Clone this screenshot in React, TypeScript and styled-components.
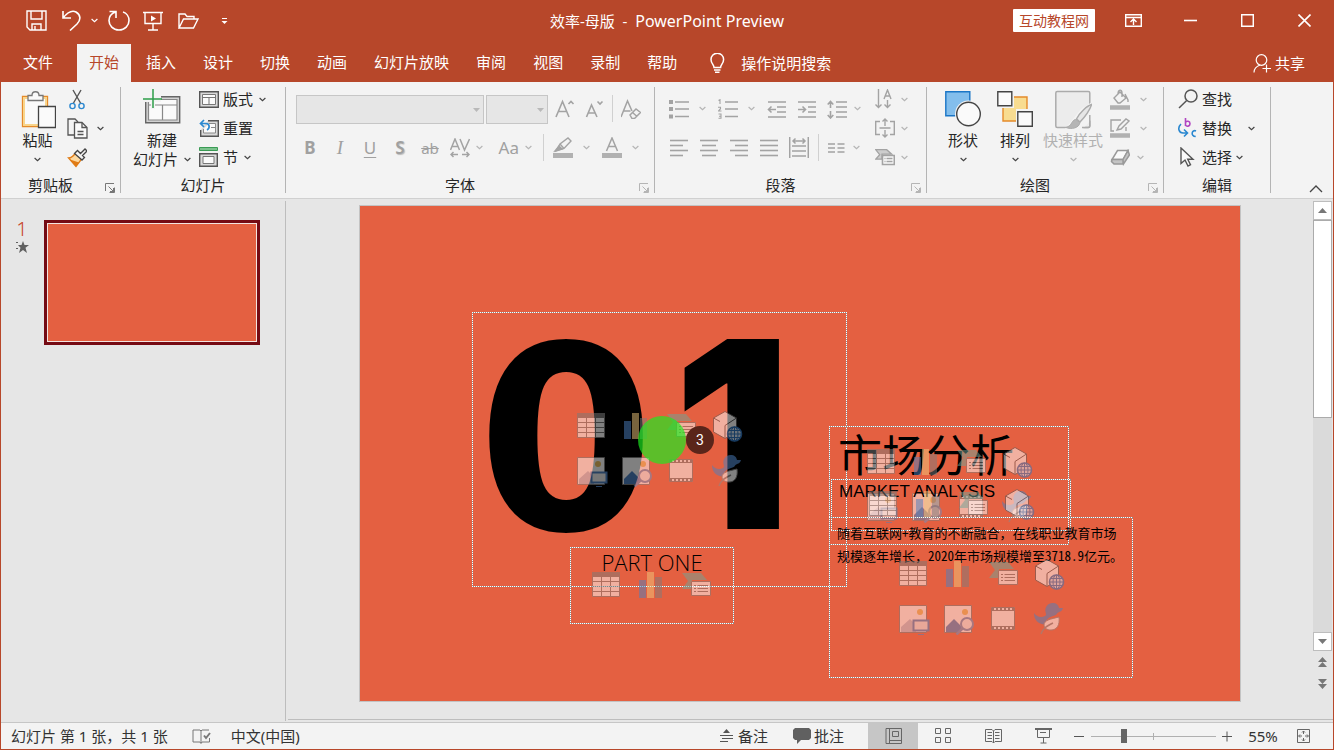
import React from "react";
import styled, { createGlobalStyle, css } from "styled-components";

const brand = "#b7472a";
const coral = "#e46041";
const uiFont = `"Noto Sans", "Noto Sans CJK SC", sans-serif`;

const GlobalStyle = createGlobalStyle`
  * { box-sizing: border-box; }
  body { margin: 0; font: 15px/19px ${uiFont}; color: #262626; }
  button, select, input { font: inherit; color: inherit; margin: 0; padding: 0; border: 0; background: none; }
  button { white-space: nowrap; }
  svg { display: block; flex: none; }
  h1, p, ol { margin: 0; padding: 0; font-weight: 400; list-style: none; }
`;

/* ---------- shell ---------- */

const Window = styled.div`
  display: flex;
  flex-direction: column;
  height: 100vh;
  min-height: 600px;
  border: 1px solid ${brand};
  background: #e6e6e6;
  overflow: hidden;
`;

const TitleBar = styled.header`
  display: grid;
  grid-template-columns: 1fr auto 1fr;
  height: 43px;
  background: ${brand};
  color: #fff;
`;

const QuickAccess = styled.div`
  display: flex;
  align-items: center;
  padding: 0 0 4px 20px;
`;

const QuickButton = styled.button<{ $w: number }>`
  width: ${(p) => p.$w}px;
  height: 30px;
  display: flex;
  align-items: center;
  justify-content: center;
`;

const DocTitle = styled.h1`
  font-size: 15px;
  line-height: 40px;
  white-space: pre;
`;

const AppName = styled.span`
  font-size: 16px;
`;

const WindowControls = styled.div`
  display: flex;
  justify-content: flex-end;
  align-items: flex-start;
`;

const AccountBadge = styled.button`
  height: 23px;
  margin: 8px 10px 0 0;
  padding: 0 6px;
  border-radius: 1px;
  background: #fff;
  color: ${brand};
  font-size: 14px;
  line-height: 23px;
`;

const ControlButton = styled.button`
  width: 57px;
  height: 38px;
  display: flex;
  align-items: center;
  justify-content: center;
`;

const TabBar = styled.nav`
  display: flex;
  gap: 3px;
  height: 38px;
  padding: 0 16px 0 10px;
  background: ${brand};
  color: #fff;
`;

const Tab = styled.button<{ $active?: boolean; $file?: boolean }>`
  padding: 0 12px 2px;
  line-height: 34px;
  ${(p) => p.$file && css`margin-right: 9px;`}
  ${(p) => p.$active && css`background: #f3f3f3; color: ${brand};`}
`;

const TabAction = styled.button<{ $gap: number }>`
  display: flex;
  align-items: center;
  gap: ${(p) => p.$gap}px;
  padding: 0 12px;
  line-height: 36px;
`;

const Spacer = styled.div`
  flex: 1;
`;

/* ---------- ribbon ---------- */

const RibbonBar = styled.section`
  display: flex;
  height: 117px;
  padding: 5px 0;
  background: #f3f3f3;
  border-bottom: 1px solid #d0d0d0;
`;

const Group = styled.div<{ $w: number }>`
  display: flex;
  flex-direction: column;
  justify-content: space-between;
  width: ${(p) => p.$w}px;
  flex: none;
  border-right: 1px solid #b4b4b4;
`;

const GroupBody = styled.div<{ $left: number; $gap?: number }>`
  display: flex;
  align-items: flex-start;
  gap: ${(p) => p.$gap ?? 0}px;
  padding-left: ${(p) => p.$left}px;
`;

const GroupFooter = styled.div`
  display: flex;
  align-items: flex-end;
  height: 16px;
  line-height: 16px;
  text-align: center;
`;

const GroupName = styled.span`
  flex: 1;
`;

const Launcher = styled.button`
  width: 20px;
  padding-left: 5px;
`;

const LargeButton = styled.button<{ $w: number; $disabled?: boolean }>`
  display: flex;
  flex-direction: column;
  align-items: center;
  width: ${(p) => p.$w}px;
  padding-top: 2px;
  color: ${(p) => (p.$disabled ? "#b1b1b1" : "#262626")};
  > svg { margin-bottom: 2px; }
`;

const LargeLine = styled.span`
  display: flex;
  align-items: center;
  gap: 6px;
  height: 19px;
`;

const Stack = styled.div<{ $left?: number }>`
  display: flex;
  flex-direction: column;
  gap: 5px;
  padding-left: ${(p) => p.$left ?? 0}px;
`;

const SmallButton = styled.button<{ $gap?: number }>`
  display: flex;
  align-items: center;
  gap: ${(p) => p.$gap ?? 6}px;
  height: 24px;
  color: #262626;
`;

const SmallLabel = styled.span`
  padding-right: 2px;
`;

const WideLabel = styled.span`
  padding-right: 12px;
`;

const RowStack = styled.div`
  display: flex;
  flex-direction: column;
  gap: 10px;
  padding-top: 8px;
`;

const ToolRow = styled.div<{ $left?: number; $gap?: number; $flush?: boolean }>`
  display: flex;
  align-items: center;
  gap: ${(p) => p.$gap ?? 10}px;
  height: 29px;
  padding-left: ${(p) => p.$left ?? 0}px;
  padding-bottom: ${(p) => (p.$flush ? 0 : 2)}px;
`;

const ToolButton = styled.button`
  width: 20px;
  height: 24px;
  display: flex;
  align-items: center;
  justify-content: center;
  color: #a0a0a0;
`;

const SplitButton = styled.button<{ $gap?: number }>`
  display: flex;
  align-items: center;
  gap: ${(p) => p.$gap ?? 10}px;
  height: 24px;
  margin-right: 2px;
  color: #a0a0a0;
`;

const Letter = styled.span<{ $look?: "bold" | "italic" | "under" | "shadow" | "strike" | "case" }>`
  font-size: 17px;
  line-height: 22px;
  ${(p) => p.$look === "bold" && css`font-weight: 700;`}
  ${(p) => p.$look === "italic" && css`font-family: "Liberation Serif", serif; font-style: italic; font-size: 19px;`}
  ${(p) => p.$look === "under" && css`text-decoration: underline; text-underline-offset: 3px;`}
  ${(p) => p.$look === "shadow" && css`font-weight: 600; text-shadow: 1px 1px 1px #bbb;`}
  ${(p) => p.$look === "strike" && css`font-size: 15px; text-decoration: line-through;`}
  ${(p) => p.$look === "case" && css`width: 24px; text-align: right;`}
`;

const Divider = styled.i`
  width: 1px;
  height: 27px;
  margin: 0 -1px;
  background: #d0d0d0;
`;

const Combo = styled.label<{ $w: number }>`
  position: relative;
  width: ${(p) => p.$w}px;
  height: 29px;
  svg { position: absolute; right: 4px; top: 13px; }
`;

const ComboSelect = styled.select`
  appearance: none;
  width: 100%;
  height: 100%;
  border: 1px solid #c6c6c6;
  background: #e6e6e6;
  opacity: 1;
`;

const CollapseButton = styled.button`
  align-self: flex-end;
  margin: 0 10px 0 0;
`;

/* ---------- work area ---------- */

const WorkArea = styled.div`
  display: flex;
  flex: 1;
  min-height: 0;
`;

const ThumbPane = styled.aside`
  width: 285px;
  flex: none;
  margin: 2px 0 1px;
  padding: 19px 0 0 11px;
  border-right: 1px solid #bdbdbd;
`;

const ThumbItem = styled.li`
  display: flex;
  gap: 12px;
`;

const ThumbIndex = styled.div`
  display: flex;
  flex-direction: column;
  align-items: center;
  gap: 4px;
  width: 20px;
  color: #c8472b;
  font-size: 20px;
  font-weight: 300;
  line-height: 17px;
`;

const Thumb = styled.button`
  width: 216px;
  height: 125px;
  border: 3px solid #750b14;
  box-shadow: inset 0 0 0 1px #f3e4e0;
  background: ${coral};
`;

const Editor = styled.main`
  flex: 1;
  display: flex;
  min-width: 0;
  margin: 0 0 2px 2px;
  border-bottom: 1px solid #bdbdbd;
`;

const Stage = styled.div`
  flex: 1;
  display: flex;
  justify-content: center;
  align-items: flex-start;
  padding: 6px 0 0;
  min-width: 0;
`;

const SlideCanvas = styled.div`
  position: relative;
  flex: none;
  width: 882px;
  height: 497px;
  border: 1px solid #c3c3c3;
  background: ${coral};
  color: #000;
`;

const dots = (dir: string) =>
  `repeating-linear-gradient(${dir}, #fff 0 1px, #8c8f90 1px 2px)`;

const Placeholder = styled.div<{ $x: number; $y: number; $w: number; $h: number }>`
  position: absolute;
  left: ${(p) => p.$x}px;
  top: ${(p) => p.$y}px;
  width: ${(p) => p.$w}px;
  height: ${(p) => p.$h}px;
  background:
    ${dots("90deg")} top / 100% 1px no-repeat,
    ${dots("90deg")} bottom / 100% 1px no-repeat,
    ${dots("180deg")} left / 1px 100% no-repeat,
    ${dots("180deg")} right / 1px 100% no-repeat;
`;

const IconGrid = styled.div<{ $cols: number }>`
  position: absolute;
  inset: 0 0 2px;
  display: grid;
  grid-template-columns: repeat(${(p) => p.$cols}, 32px);
  gap: 13px;
  place-content: center;
  opacity: 0.5;
`;

const BigNumber = styled.p`
  display: flex;
  align-items: baseline;
  gap: 18px;
  padding-left: 5px;
  font: 900 261px/245px Inter, sans-serif;
`;

const RoundDigit = styled.span`
  font-family: "DejaVu Sans", sans-serif;
  font-size: 256px;
  font-weight: 700;
`;

const PartLabel = styled.p`
  padding-top: 3px;
  text-align: center;
  font: 300 22px/24px "Open Sans", sans-serif;
`;

const Headline = styled.p`
  padding: 4px 0 0 9px;
  font: 400 44px/46px "Noto Sans CJK SC", sans-serif;
  white-space: nowrap;
`;

const Subhead = styled.p`
  padding: 3px 0 0 8px;
  font: 17px/20px "Liberation Sans", sans-serif;
`;

const BodyCopy = styled.p`
  padding: 4px 0 0 8px;
  font: 13px/23px "Noto Sans CJK SC", sans-serif;
  white-space: nowrap;
`;

const HalfWidth = styled.span`
  font-feature-settings: "hwid" 1;
`;

const ClickDot = styled.i`
  position: absolute;
  left: 278px;
  top: 210px;
  width: 48px;
  height: 48px;
  border-radius: 50%;
  background: rgba(28, 234, 31, 0.68);
`;

const ClickCount = styled.b`
  position: absolute;
  left: 326px;
  top: 220px;
  width: 28px;
  height: 28px;
  border-radius: 50%;
  background: #5a251a;
  color: #fff;
  font: 14px/28px Roboto, sans-serif;
  text-align: center;
`;

/* ---------- scroll bar ---------- */

const ScrollColumn = styled.div`
  width: 21px;
  flex: none;
  display: flex;
  flex-direction: column;
  align-items: center;
  padding: 2px 0 24px;
`;

const ScrollButton = styled.button`
  width: 19px;
  height: 19px;
  display: grid;
  place-items: center;
  border: 1px solid #bdbdbd;
  background: #fff;
`;

const ScrollTrack = styled.div`
  flex: 1;
  width: 19px;
  background: #dadada;
`;

const ScrollThumb = styled.div`
  height: 48%;
  border: 1px solid #ababab;
  background: #fff;
`;

const PageButton = styled.button`
  width: 19px;
  height: 22px;
  display: grid;
  place-items: center;
`;

/* ---------- status bar ---------- */

const StatusBar = styled.footer`
  display: flex;
  align-items: center;
  height: 27px;
  flex: none;
  padding: 0 15px 0 10px;
  background: #f3f3f3;
  border-top: 1px solid #c6c6c6;
`;

const StatusItem = styled.button<{ $gap?: number; $right?: number }>`
  display: flex;
  align-items: center;
  gap: ${(p) => p.$gap ?? 0}px;
  margin-right: ${(p) => p.$right ?? 0}px;
  color: #333;
`;

const ViewButton = styled.button<{ $active?: boolean }>`
  width: 50px;
  height: 26px;
  display: grid;
  place-items: center;
  background: ${(p) => (p.$active ? "#c6c6c6" : "transparent")};
`;

const ZoomButton = styled.button`
  width: 23px;
  height: 26px;
  display: grid;
  place-items: center;
`;

const ZoomRange = styled.input`
  appearance: none;
  width: 125px;
  height: 14px;
  background:
    linear-gradient(#b0b0b0, #b0b0b0) center / 1px 7px no-repeat,
    linear-gradient(#b0b0b0, #b0b0b0) center / 100% 1px no-repeat;
  &::-webkit-slider-thumb {
    appearance: none;
    width: 6px;
    height: 14px;
    background: #666;
  }
`;

const ZoomValue = styled.button`
  width: 48px;
  margin-right: 10px;
  color: #333;
`;

/* ---------- icons ---------- */

type IconProps = {
  w?: number;
  h?: number;
  vb?: string;
  stroke?: string;
  fill?: string;
  sw?: number;
  children: React.ReactNode;
};

const Icon = ({ w = 20, h = 20, vb, stroke = "#555", fill = "none", sw = 1, children }: IconProps) => (
  <svg width={w} height={h} viewBox={vb ?? `0 0 ${w} ${h}`} fill={fill} stroke={stroke} strokeWidth={sw} aria-hidden="true">
    {children}
  </svg>
);

const Chevron = ({ c = "#444" }: { c?: string }) => (
  <Icon w={7} h={5} stroke={c} sw={1.2}><path d="M.6 1l2.9 2.6L6.4 1" /></Icon>
);

const Caret = () => (
  <Icon w={8} h={4} fill="#b9b9b9" stroke="none"><path d="M1 0h7L4.500 4z" /></Icon>
);

const LauncherIcon = ({ c = "#777" }: { c?: string }) => (
  <Icon w={10} h={10} stroke={c}><path d="M.5 8V.5H9M3.500 3.500l5 5M9.500 4.500v5h-5M8.500 5v4.500M5 8.500h4" /></Icon>
);

const gray = "#a3a3a3";

const Lines = ({ rows }: { rows: [number, number][] }) => (
  <Icon h={18} stroke={gray} sw={1.6}>
    {rows.map(([a, b], i) => <path key={i} d={`M${a} ${1.5 + i * 5}H${b}`} />)}
  </Icon>
);

const TableGlyph = () => (
  <Icon w={32} h={32} stroke="#7a7a7a">
    <path d="M1.500 7.500h27v20h-27z" fill="#fff" />
    <path d="M1 3h28v5H1z" fill="#7a7a7a" stroke="none" />
    <path d="M10.500 8v19M19.500 8v19M2 12.500h26M2 17.500h26M2 22.500h26" />
  </Icon>
);
const ChartGlyph = () => (
  <Icon w={32} h={32} stroke="none">
    <path d="M3 11h7v18H3z" fill="#4c80bf" />
    <path d="M11 3h7v26h-7z" fill="#f0c87c" />
    <path d="M19 8h7v21h-7z" fill="#7d7d7d" />
  </Icon>
);
const SmartArtGlyph = () => (
  <Icon w={32} h={32} stroke="#7a7a7a">
    <path d="M1 4h19l6 7H11v9H1l6-8z" fill="#70a497" stroke="none" />
    <path d="M10.500 12.500h19v14h-19z" fill="#fff" />
    <path d="M13 16.500h2M16.500 16.500H27M13 19.500h2M16.500 19.500H27M13 22.500h2M16.500 22.500H27" />
  </Icon>
);
const CubeGlyph = () => (
  <Icon w={32} h={32} stroke="#555">
    <path d="M14 1.500L25.500 8v14L14 28.500 2.500 22V8z" fill="#fff" />
    <path d="M2.500 8L9 11.500M14 28V15.500L25.500 8" />
    <circle cx="23.500" cy="24" r="7" fill="#d6e3f2" stroke="#2f74bd" strokeWidth="1.600" />
    <path d="M16.500 24h14M18 20.500h11M18 27.500h11M23.500 17v14" stroke="#2f74bd" />
    <ellipse cx="23.500" cy="24" rx="3.500" ry="7" stroke="#2f74bd" />
  </Icon>
);
const PictureGlyph = () => (
  <Icon w={32} h={32} stroke="#7a7a7a">
    <path d="M1.500 2.500h27v27h-27z" fill="#fff" />
    <circle cx="22" cy="9" r="3" fill="#f0c060" stroke="none" />
    <path d="M3 29v-5l9-8 6 6v7z" fill="#c0c8d8" stroke="none" />
    <path d="M15.500 17.500h15v10h-15z" fill="#eee" stroke="#4c80bf" strokeWidth="2" />
    <path d="M20 31.500h6" stroke="#4c80bf" />
  </Icon>
);
const OnlinePictureGlyph = () => (
  <Icon w={32} h={32} stroke="#7a7a7a">
    <path d="M1.500 2.500h27v27h-27z" fill="#fff" />
    <circle cx="22" cy="9" r="3" fill="#f0c060" stroke="none" />
    <path d="M3 29v-5l8-8 7 7v6z" fill="#4c80bf" stroke="none" />
    <circle cx="24" cy="21" r="6" fill="#f6f6f6" stroke="#6d8fc0" strokeWidth="2" />
    <path d="M19.500 25.500l-6 6" stroke="#6d8fc0" strokeWidth="2.500" />
  </Icon>
);
const FilmGlyph = () => (
  <Icon w={32} h={32} stroke="#7a7a7a">
    <path d="M3.500 4.500h23v22h-23z" fill="#fff" />
    <path d="M4 6h22M4 25h22" strokeWidth="3" strokeDasharray="2 2" />
    <path d="M4 7.500h22M4 23.500h22" />
  </Icon>
);
const DuckGlyph = () => (
  <Icon w={32} h={32} stroke="none">
    <path d="M1 10c3 4 7 5 11 3 1.500-1 1-2 .5-4C11.500 4 15 0 19.500 0c4 0 6 2 6.500 5h4c-1 4-4 3.500-5.500 5-1 1-1 2-3 2.500-6 1.500-9 4.500-9.500 9C5 21 1 17 1 10z" fill="#4c80bf" />
    <path d="M26 14c1 8-2 13-8 13-4 0-7-2-7-5 0-5 7-6 15-8z" fill="#fff" stroke="#8a8a8a" />
    <path d="M8 31c2-6 6-8 12-11" fill="none" stroke="#8a8a8a" strokeWidth="1.500" />
  </Icon>
);

const allGlyphs = [TableGlyph, ChartGlyph, SmartArtGlyph, CubeGlyph, PictureGlyph, OnlinePictureGlyph, FilmGlyph, DuckGlyph];

const ContentIcons = ({ count }: { count: number }) => (
  <IconGrid $cols={Math.min(count, 4)}>
    {allGlyphs.slice(0, count).map((G, i) => <G key={i} />)}
  </IconGrid>
);

/* ---------- sections ---------- */

const tabs = ["插入", "设计", "切换", "动画", "幻灯片放映", "审阅", "视图", "录制", "帮助"];

const Header = () => (
  <>
    <TitleBar>
      <QuickAccess>
        <QuickButton $w={30} aria-label="保存">
          <Icon w={21} h={21} stroke="#fff" sw={1.4}><path d="M1 1h19v19H4l-3-3zM5 1v8h11V1M6 20v-6h9v6M9 16v4" /></Icon>
        </QuickButton>
        <QuickButton $w={40} aria-label="撤消">
          <Icon w={19} h={21} stroke="#fff" sw={1.6}><path d="M1 1v7h8M1 8c4-5 9-8 13-6 5 3 5 8 1 12l-7 6.500" /></Icon>
        </QuickButton>
        <QuickButton $w={6} aria-label="撤消选项"><Chevron c="#fff" /></QuickButton>
        <QuickButton $w={43} aria-label="重复">
          <Icon w={22} h={21} stroke="#fff" sw={1.6}><path d="M1.500 1.500H8V8M7.500 2C3.500 3.500 1 7 1 10.500 1 15.500 5 20 11 20s10-4.500 10-9.500c0-4-2.500-7.500-6-8.500" /></Icon>
        </QuickButton>
        <QuickButton $w={26} aria-label="从头开始">
          <Icon w={20} h={20} stroke="#fff" sw={1.4}><path d="M0 1.500h20M2 2v10.500h16V2M10 12.500V19M5 19h10" /><path d="M8 4.500l5 3-5 3z" fill="#fff" stroke="none" /></Icon>
        </QuickButton>
        <QuickButton $w={45} aria-label="打开">
          <Icon w={21} h={16} stroke="#fff" sw={1.4}><path d="M1 15V1h6l2 2.500h7V6M1 15L5.500 6H20l-4.500 9z" /></Icon>
        </QuickButton>
        <QuickButton $w={26} aria-label="自定义快速访问工具栏">
          <Icon w={7} h={8} stroke="#fff"><path d="M1 1.500h5" /><path d="M.5 4h6l-3 3z" fill="#fff" stroke="none" /></Icon>
        </QuickButton>
      </QuickAccess>
      <DocTitle>{"效率-母版  -  "}<AppName>PowerPoint Preview</AppName></DocTitle>
      <WindowControls>
        <AccountBadge>互动教程网</AccountBadge>
        <ControlButton aria-label="功能区显示选项">
          <Icon w={17} h={13} stroke="#fff" sw={1.4}><path d="M.7.700h15.600v11.600H.7zM1 3.500h15M8.500 11V5.500M5.500 8l3-3 3 3" /></Icon>
        </ControlButton>
        <ControlButton aria-label="最小化"><Icon w={13} h={13} stroke="#fff" sw={1.6}><path d="M0 6.500h13" /></Icon></ControlButton>
        <ControlButton aria-label="最大化"><Icon w={13} h={13} stroke="#fff" sw={1.5}><path d="M.7.700h11.600v11.600H.7z" /></Icon></ControlButton>
        <ControlButton aria-label="关闭"><Icon w={13} h={13} stroke="#fff" sw={1.6}><path d="M.5.500l12 12M12.500.500l-12 12" /></Icon></ControlButton>
      </WindowControls>
    </TitleBar>
    <TabBar>
      <Tab $file>文件</Tab>
      <Tab $active>开始</Tab>
      {tabs.map((t) => <Tab key={t}>{t}</Tab>)}
      <TabAction $gap={13}>
        <Icon w={24} h={20} vb="-6 0 24 20" stroke="#fff" sw={1.500}>
          <path d="M4 14.500c0-3-3-4-3-8a6.300 6.300 0 0 1 12.600 0c0 4-3 5-3 8zM4 17h6.500M5 19.300h4.500" />
        </Icon>
        操作说明搜索
      </TabAction>
      <Spacer />
      <TabAction $gap={3}>
        <Icon w={19} h={19} stroke="#fff" sw={1.2}><path d="M1 18.500c0-4 2-6 6-7.500M13.500 10.500v8M9.500 14.500h8.500" /><circle cx="8.500" cy="6" r="5.300" /></Icon>
        共享
      </TabAction>
    </TabBar>
  </>
);

const Footer = ({ name, launcher }: { name: string; launcher?: string }) => (
  <GroupFooter>
    <GroupName>{name}</GroupName>
    {launcher && <Launcher aria-label={`${name}设置`}><LauncherIcon c={launcher} /></Launcher>}
  </GroupFooter>
);

const off = "#b5b5b5";

const Ribbon = () => (
  <RibbonBar>
    <Group $w={120}>
      <GroupBody $left={17} $gap={5}>
        <LargeButton $w={39}>
          <Icon w={36} h={40}>
            <path d="M2.500 7.500h25v30h-25z" fill="#fafafa" stroke="#e58a2a" strokeWidth="1.300" />
            <path d="M4 9h22v27H4z" stroke="#f8d58c" strokeWidth="2" />
            <path d="M8 11.500v-5h4c0-5 7-5 7 0h4v5z" fill="#fafafa" stroke="#777" strokeWidth="1.300" />
            <path d="M18.500 17.500h17v21h-17z" fill="#fafafa" stroke="#444" strokeWidth="1.300" />
          </Icon>
          <LargeLine>粘贴</LargeLine>
          <LargeLine><Chevron /></LargeLine>
        </LargeButton>
        <Stack $left={5}>
          <SmallButton aria-label="剪切">
            <Icon h={21} sw={1.400}><path d="M6 1l7.500 13M14 1L6.500 14" /><circle cx="5.500" cy="17" r="2.600" stroke="#2b88d0" /><circle cx="14.500" cy="17" r="2.600" stroke="#2b88d0" /></Icon>
          </SmallButton>
          <SmallButton $gap={9} aria-label="复制">
            <Icon w={21} h={21} sw={1.300}><path d="M7 17H1V1h7l3 3" /><path d="M7.500 4.500h7.500l5 5V20H7.500z" fill="#fafafa" /><path d="M15 5v4.500h5M10.500 13.500h6M10.500 16.500h6" /></Icon>
            <Chevron />
          </SmallButton>
          <SmallButton aria-label="格式刷">
            <Icon h={21} sw={1.300}><path d="M9 5.500l6 6-6 8L1.500 11c3 0 5-2 7.500-5.500z" fill="#fdd9a0" stroke="#e07b15" /><path d="M3 12.500l6 7 3-4z" fill="#e07b15" stroke="none" /><path d="M7.500 6.500l3-3 3 3L18 2l2 2-4.500 4.500 2 2-2.500 2.500z" fill="#f3f3f3" stroke="#444" /></Icon>
          </SmallButton>
        </Stack>
      </GroupBody>
      <Footer name="剪贴板" launcher="#777" />
    </Group>

    <Group $w={165}>
      <GroupBody $left={10} $gap={5}>
        <LargeButton $w={62}>
          <Icon w={38} h={40}>
            <path d="M2.700 7.700h34v26h-34z" fill="#d2d2d2" stroke="#666" strokeWidth="1.400" />
            <path d="M5.500 10.500h28.500v20.500H5.500zM5.500 16h28.500M19.500 16v15" fill="#fafafa" stroke="#888" strokeWidth="1.200" />
            <path d="M0 6h18v7H12v7H8V13H0z" fill="#f3f3f3" stroke="none" />
            <path d="M0 10h19M10 0v19" stroke="#2e9e4a" strokeWidth="1.500" />
          </Icon>
          <LargeLine>新建</LargeLine>
          <LargeLine>幻灯片 <Chevron /></LargeLine>
        </LargeButton>
        <Stack $left={1}>
          <SmallButton $gap={4}>
            <Icon h={17}><path d="M.7.700h18.600v15.600H.7z" fill="#d9d9d9" strokeWidth="1.400" /><path d="M3.500 3.500h13v10h-13zM3.500 6.500h13M10 6.500v7" fill="#fafafa" stroke="#777" /></Icon>
            <SmallLabel>版式</SmallLabel><Chevron />
          </SmallButton>
          <SmallButton $gap={4}>
            <Icon h={18}><path d="M9 1.700h10.300v15.600H1.700V11" fill="#d9d9d9" strokeWidth="1.400" /><path d="M10 4.500h6.500v9.500H4.500v-4M12 8.500h4" fill="#fafafa" stroke="#888" /><path d="M1 4.500h6c4 0 4 5 1 6.500M5 1L1.500 4.500 5 8" stroke="#2b88d0" strokeWidth="1.700" /></Icon>
            重置
          </SmallButton>
          <SmallButton $gap={4}>
            <Icon h={20}><path d="M.5.500h18v3H.5z" fill="#7cc28d" stroke="#3a9b54" /><path d="M.7 6.700h17.600v12.600H.7z" strokeWidth="1.400" fill="#d9d9d9" /><path d="M4 9.500h11v7H4z" fill="#fafafa" stroke="#777" /></Icon>
            <SmallLabel>节</SmallLabel><Chevron />
          </SmallButton>
        </Stack>
      </GroupBody>
      <Footer name="幻灯片" />
    </Group>

    <Group $w={369}>
      <GroupBody $left={10}>
        <RowStack>
          <ToolRow $gap={2} $flush>
            <Combo $w={188}><ComboSelect disabled aria-label="字体" /><Caret /></Combo>
            <Combo $w={62}><ComboSelect disabled aria-label="字号" /><Caret /></Combo>
            <ToolRow $left={5} $gap={9}>
              <ToolButton aria-label="增大字号"><Icon stroke={gray} sw={1.600}><path d="M1 18L7.500 2.500 14 18M3.500 12.500h8" /><path d="M13.500 5l2.500-2.500L18.500 5" /></Icon></ToolButton>
              <ToolButton aria-label="减小字号"><Icon stroke={gray} sw={1.600}><path d="M2.500 18L7.500 6 13 18M4.500 14h7" /><path d="M13.500 2.500L16 5l2.500-2.500" /></Icon></ToolButton>
              <Divider />
              <ToolButton aria-label="清除格式"><Icon stroke={gray} sw={1.500}><path d="M0 18L6.500 2 11 12M2.500 12h7" /><path d="M9 16l6-6 4.500 3.500-6 6H11zM11.500 13.500l4 3.500" /></Icon></ToolButton>
            </ToolRow>
          </ToolRow>
          <ToolRow $left={4}>
            <ToolButton aria-label="加粗"><Letter $look="bold">B</Letter></ToolButton>
            <ToolButton aria-label="倾斜"><Letter $look="italic">I</Letter></ToolButton>
            <ToolButton aria-label="下划线"><Letter $look="under">U</Letter></ToolButton>
            <ToolButton aria-label="文字阴影"><Letter $look="shadow">S</Letter></ToolButton>
            <ToolButton aria-label="删除线"><Letter $look="strike">ab</Letter></ToolButton>
            <SplitButton $gap={6} aria-label="字符间距">
              <Icon h={20} stroke={gray} sw={1.500}><path d="M.5 12L5 1l4.500 11M2 8.500h6M10 1l4.500 11L19.500 1M1 16.500h7M12 16.500h7M3.500 14L1 16.500 3.500 19M16.500 14l2.500 2.500-2.500 2.500" /></Icon>
              <Chevron c={off} />
            </SplitButton>
            <SplitButton $gap={6} aria-label="更改大小写"><Letter $look="case">Aa</Letter><Chevron c={off} /></SplitButton>
            <Divider />
            <SplitButton aria-label="突出显示颜色">
              <Icon h={22} stroke={gray} sw={1.400}><path d="M3 14l4-7 8-6 3 3-7 7.500zM7 7l4 4.500" /><path d="M2 14l4-5 3 3z" fill={gray} /><path d="M0 18.500h20" stroke="#b1b1b1" strokeWidth="5" /></Icon>
              <Chevron c={off} />
            </SplitButton>
            <SplitButton aria-label="字体颜色">
              <Icon h={22} stroke={gray} sw={1.500}><path d="M4.500 14L10 1l5.500 13M6.500 9.500h7" /><path d="M0 18.500h20" stroke="#b1b1b1" strokeWidth="5" /></Icon>
              <Chevron c={off} />
            </SplitButton>
          </ToolRow>
        </RowStack>
      </GroupBody>
      <Footer name="字体" launcher={off} />
    </Group>

    <Group $w={272}>
      <GroupBody $left={14} $gap={12}>
        <RowStack>
          <ToolRow>
            <SplitButton aria-label="项目符号">
              <Icon stroke={gray} sw={1.600}><path d="M6 3h14M6 10h14M6 17.500h14" /><path d="M0 3h4M0 10h4M0 17.500h4" strokeWidth="4" /></Icon>
              <Chevron c={off} />
            </SplitButton>
            <SplitButton aria-label="编号">
              <Icon stroke={gray} sw={1.600}><path d="M7 3h13M7 10h13M7 17.500h13" /><path d="M.5 1.500L2 .700V5M0 8.200h2.500v1.500L.5 12H3.500M.5 15h2.500v4.300H.5M1 17.200h2" strokeWidth="1.100" /></Icon>
              <Chevron c={off} />
            </SplitButton>
            <ToolButton aria-label="减少缩进"><Icon stroke={gray} sw={1.600}><path d="M1 3h18M10 8h9M10 13h9M1 18h18M1.500 10.500H9M4.500 7.500l-3 3 3 3" /></Icon></ToolButton>
            <ToolButton aria-label="增加缩进"><Icon stroke={gray} sw={1.600}><path d="M1 3h18M11 8h8M11 13h8M1 18h18M1 10.500h7.500M5.500 7.500l3 3-3 3" /></Icon></ToolButton>
            <SplitButton $gap={7} aria-label="行距">
              <Icon stroke={gray} sw={1.600}><path d="M9 3h12M9 8h12M9 13h12M9 18h12M3.500 3v6M3.500 12v7M.7 5.500l2.800-3 2.800 3M.7 16l2.800 3 2.800-3" /></Icon>
              <Chevron c={off} />
            </SplitButton>
          </ToolRow>
          <ToolRow>
            <ToolButton aria-label="左对齐"><Lines rows={[[1, 19], [1, 14], [1, 19], [1, 14]]} /></ToolButton>
            <ToolButton aria-label="居中"><Lines rows={[[1, 19], [3, 17], [1, 19], [3, 17]]} /></ToolButton>
            <ToolButton aria-label="右对齐"><Lines rows={[[1, 19], [6, 19], [1, 19], [6, 19]]} /></ToolButton>
            <ToolButton aria-label="两端对齐"><Lines rows={[[1, 19], [1, 19], [1, 19], [1, 19]]} /></ToolButton>
            <ToolButton aria-label="分散对齐"><Icon h={21} stroke={gray} sw={1.500}><path d="M.7 0v21M19.300 0v21M3 9h14M3 14h14M3 19h14M4 4h12M6.500 1.500L4 4l2.500 2.500M13.500 1.500L16 4l-2.500 2.500" /></Icon></ToolButton>
            <Divider />
            <SplitButton $gap={8} aria-label="分栏">
              <Icon w={17} h={12} stroke={gray} sw={1.400}><path d="M0 2h7M9.500 2h7M0 6h7M9.500 6h7M0 10h7M9.500 10h7" /></Icon>
              <Chevron c={off} />
            </SplitButton>
          </ToolRow>
        </RowStack>
        <Stack>
          <SplitButton $gap={6} aria-label="文字方向">
            <Icon w={20} stroke={gray} sw={1.400}><path d="M3.500 0v18M.5 15.500l3 3 3-3M9 10L12.500 1 16 10M10.200 7h4.600M12.500 11v7M9.500 15.500l3 3 3-3" /></Icon><Chevron c={off} />
          </SplitButton>
          <SplitButton $gap={6} aria-label="对齐文本">
            <Icon w={20} stroke={gray} sw={1.400}><path d="M5 3.500H.7v13H5M15 3.500h4.300v13H15M4.500 10h11M10 1v7M10 12v7M7.500 3.500L10 1l2.500 2.500M7.500 16.500L10 19l2.500-2.500" /></Icon><Chevron c={off} />
          </SplitButton>
          <SplitButton $gap={6} aria-label="转换为 SmartArt">
            <Icon w={20} stroke={gray} sw={1.300}><path d="M.7 2.700h11l5 4.500H7v5H.7l4-4.500z" fill="#cdcdcd" /><path d="M7.500 8.500h11.800v9H7.500z" fill="#f8f8f8" strokeWidth="1.600" /><path d="M9.500 11.500h1M11.500 11.500h6M9.500 14.500h1M11.500 14.500h6" /></Icon><Chevron c={off} />
          </SplitButton>
        </Stack>
      </GroupBody>
      <Footer name="段落" launcher={off} />
    </Group>

    <Group $w={237}>
      <GroupBody $left={10}>
        <LargeButton $w={52}>
          <Icon w={36} h={40}>
            <path d="M.8 2.800h24v24H.8z" fill="#83beec" stroke="#1b76c6" strokeWidth="1.400" />
            <circle cx="23.500" cy="25" r="13.500" fill="#f3f3f3" stroke="none" /><circle cx="23.500" cy="25" r="11.800" fill="#fafafa" stroke="#444" strokeWidth="1.400" />
          </Icon>
          <LargeLine>形状</LargeLine><LargeLine><Chevron /></LargeLine>
        </LargeButton>
        <LargeButton $w={52}>
          <Icon w={36} h={40}>
            <path d="M6 8h24v24H6z" fill="#f8dc90" stroke="#e58a2a" strokeWidth="1.400" />
            <path d="M0 1h17v18H0zM19 20h17v18H19z" fill="#f3f3f3" stroke="none" />
            <path d="M.8 2.800h14v14H.8zM20.800 22.800h14.500v14.500H20.800z" fill="#fafafa" stroke="#444" strokeWidth="1.400" />
          </Icon>
          <LargeLine>排列</LargeLine><LargeLine><Chevron /></LargeLine>
        </LargeButton>
        <LargeButton $w={64} $disabled>
          <Icon w={38} h={40} stroke="#ababab">
            <path d="M1.800 4q0-1.500 1.500-1.500h31q1.500 0 1.500 1.500v33q0 1.500-1.500 1.500h-31q-1.500 0-1.500-1.500z" fill="#ececec" strokeWidth="1.500" />
            <path d="M38 13v17l-9 10H11l8-10 8-10z" fill="#f3f3f3" stroke="none" />
            <path d="M35.800 26v11q0 1.500-1.500 1.500H28" strokeWidth="1.500" />
            <path d="M37.500 15.500c-4 1-12 8-15 14.500l3.500 3C31 28 36.500 20 37.500 15.500z" fill="#e6e6e6" strokeWidth="1.500" />
            <path d="M21.500 30.500c-4 .500-3 6-9.500 8 5 2 13 1 14-5z" fill="#b5b5b5" />
          </Icon>
          <LargeLine>快速样式</LargeLine><LargeLine><Chevron c={off} /></LargeLine>
        </LargeButton>
        <Stack $left={5}>
          <SplitButton aria-label="形状填充">
            <Icon h={21} stroke={gray} sw={1.400}><path d="M4 9l6-6 6 6-6 5H8zM8 5c0-5 4-5 4-1v4M15 5l3 6v2" /><path d="M0 18.500h20" stroke="#b1b1b1" strokeWidth="4.500" /></Icon><Chevron c={off} />
          </SplitButton>
          <SplitButton aria-label="形状轮廓">
            <Icon h={20} stroke={gray} sw={1.400}><path d="M11 2H1v11h3M16 9v4" /><path d="M7 12l2-4 7-7 3 2-8 8z" /><path d="M0 17.500h20" stroke="#b1b1b1" strokeWidth="4.500" /></Icon><Chevron c={off} />
          </SplitButton>
          <SplitButton $gap={7} aria-label="形状效果">
            <Icon h={17} stroke="#999" sw={1.500}><path d="M7.500 1.500h10.500l-5 9H2z" fill="#fafafa" /><path d="M2 10.500h11V15H4l-2.500-2.500zM13 10.500l5-9L19.500 6 13.500 15z" fill="#c4c4c4" /></Icon><Chevron c={off} />
          </SplitButton>
        </Stack>
      </GroupBody>
      <Footer name="绘图" launcher={off} />
    </Group>

    <Group $w={107}>
      <GroupBody $left={14}>
        <Stack>
          <SmallButton $gap={4}>
            <Icon sw={1.500}><circle cx="13" cy="7" r="6" /><path d="M8.700 11.500L1 19" /></Icon>查找
          </SmallButton>
          <SmallButton $gap={4}>
            <Icon h={22} sw={1.600}><path d="M7.500 1v8M7.500 5.500c1-2 4.500-1.500 4.500 1.200S8.500 10 7.500 8" stroke="#b146c2" /><path d="M18 14c-4-2-6 5-.3 5.500" stroke="#2b88d0" /><path d="M3 7c-4 4-2 9 2 9h4M6 12.500L9.500 16 6 19.500" stroke="#2b88d0" /></Icon>
            <WideLabel>替换</WideLabel><Chevron />
          </SmallButton>
          <SmallButton $gap={4}>
            <Icon sw={1.400}><path d="M3 1v15.500l4-3.500 3 6 2.500-1.200-2.800-5.600H15z" fill="#fafafa" /></Icon>选择 <Chevron />
          </SmallButton>
        </Stack>
      </GroupBody>
      <Footer name="编辑" />
    </Group>
    <Spacer />
    <CollapseButton aria-label="折叠功能区"><Icon w={14} h={8} stroke="#444" sw={1.300}><path d="M1 7l6-6 6 6" /></Icon></CollapseButton>
  </RibbonBar>
);

const Slide = () => (
  <SlideCanvas>
    <Placeholder $x={112} $y={106} $w={375} $h={275}>
      <BigNumber><RoundDigit>0</RoundDigit><span>1</span></BigNumber>
      <ContentIcons count={8} />
    </Placeholder>
    <Placeholder $x={210} $y={341} $w={164} $h={77}>
      <PartLabel>PART ONE</PartLabel>
      <ContentIcons count={3} />
    </Placeholder>
    <Placeholder $x={469} $y={220} $w={240} $h={119}>
      <Headline>市场分析</Headline>
      <ContentIcons count={8} />
    </Placeholder>
    <Placeholder $x={471} $y={273} $w={240} $h={52}>
      <Subhead>MARKET ANALYSIS</Subhead>
      <ContentIcons count={4} />
    </Placeholder>
    <Placeholder $x={469} $y={311} $w={304} $h={161}>
      <BodyCopy>
        随着互联网<HalfWidth>+</HalfWidth>教育的不断融合，在线职业教育市场
        <br />
        规模逐年增长，<HalfWidth>2020</HalfWidth>年市场规模增至<HalfWidth>3718.9</HalfWidth>亿元。
      </BodyCopy>
      <ContentIcons count={8} />
    </Placeholder>
    <ClickDot />
    <ClickCount>3</ClickCount>
  </SlideCanvas>
);

const Status = () => (
  <StatusBar>
    <StatusItem $right={24}>幻灯片 第 1 张，共 1 张</StatusItem>
    <StatusItem $right={20} aria-label="拼写检查">
      <Icon w={19} h={15} stroke="#777"><path d="M9 2L8 1H1v12h7l1 1.500 1-1.500h7.500V9M9 2v12M9 2l1-1h7" /><path d="M12 6.500l2 2.500 4-5" strokeWidth="2" /></Icon>
    </StatusItem>
    <StatusItem>中文(中国)</StatusItem>
    <Spacer />
    <StatusItem $gap={4} $right={25}>
      <Icon w={15} h={14}><path d="M7.500 0l3.500 4H4z" fill="#555" stroke="none" /><path d="M1 6.500h13M3 9.500h11M1 12.500h8" /></Icon>备注
    </StatusItem>
    <StatusItem $gap={3} $right={24}>
      <Icon w={18} h={16} fill="#606060" stroke="none"><path d="M2 0h14l2 2v8l-2 2H8l-4 4v-4H2l-2-2V2z" /></Icon>批注
    </StatusItem>
    <ViewButton $active aria-label="普通视图">
      <Icon w={17} h={16} stroke="#666"><path d="M1 .500h15.500v15H1zM4.500 1v14M5 12.500h11M7.500 3.500h6v5h-6z" /></Icon>
    </ViewButton>
    <ViewButton aria-label="幻灯片浏览">
      <Icon w={17} h={16} stroke="#666"><path d="M.5.500h5v5h-5zM10.500.500h5v5h-5zM.5 9.500h5v5h-5zM10.500 9.500h5v5h-5z" /></Icon>
    </ViewButton>
    <ViewButton aria-label="阅读视图">
      <Icon w={17} h={15} stroke="#666"><path d="M8.500 2L7 .500H.5v12H7l1.500 1.500L10 12.500h6.500V.500H10zM8.500 2v12M2.500 3.500H7M2.500 6.500H7M2.500 9.500H7M10 3.500h4.500M10 6.500h4.500M10 9.500h4.500" /></Icon>
    </ViewButton>
    <ViewButton aria-label="幻灯片放映">
      <Icon w={17} h={16} stroke="#666"><path d="M0 1h17" strokeWidth="2" /><path d="M2.500 2v7.500h12V2M5 4.500h6M8.500 9.500V15M5.500 15h6" /></Icon>
    </ViewButton>
    <ZoomButton aria-label="缩小"><Icon w={11} h={11}><path d="M0 5.500h10" /></Icon></ZoomButton>
    <ZoomRange type="range" min={0} max={100} defaultValue={25} aria-label="缩放" />
    <ZoomButton aria-label="放大"><Icon w={11} h={11}><path d="M0 5.500h10M5 .500v10" /></Icon></ZoomButton>
    <ZoomValue>55%</ZoomValue>
    <StatusItem $right={8} aria-label="适应窗口">
      <Icon w={13} h={14} stroke="#666"><path d="M.5.500h12v13H.5z" /><path d="M6.500 2v3M6.500 9v3M2 7h3M8 7h3M5 3.500L6.500 2 8 3.500M5 10.500L6.500 12 8 10.500M3 5.500L1.500 7 3 8.500M10 5.500L11.500 7 10 8.500" /></Icon>
    </StatusItem>
  </StatusBar>
);

export default function App() {
  return (
    <>
      <GlobalStyle />
      <Window>
        <Header />
        <Ribbon />
        <WorkArea>
          <ThumbPane>
            <ol>
              <ThumbItem>
                <ThumbIndex>
                  1
                  <Icon w={13} h={12} fill="#606060" stroke="none"><path d="M7 0l1.500 4H13L9.500 6.800 11 12 7 9l-4 3 1.500-5.200L2 4h3.500zM0 1h2v1H0zM0 7h2v1H0z" /></Icon>
                </ThumbIndex>
                <Thumb aria-label="幻灯片 1" />
              </ThumbItem>
            </ol>
          </ThumbPane>
          <Editor>
            <Stage><Slide /></Stage>
            <ScrollColumn>
              <ScrollButton aria-label="向上滚动"><Icon w={9} h={5} fill="#777" stroke="none"><path d="M0 5h9L4.500 0z" /></Icon></ScrollButton>
              <ScrollTrack><ScrollThumb /></ScrollTrack>
              <ScrollButton aria-label="向下滚动"><Icon w={9} h={5} fill="#777" stroke="none"><path d="M0 0h9L4.500 5z" /></Icon></ScrollButton>
              <PageButton aria-label="上一张"><Icon w={9} h={10} fill="#777" stroke="none"><path d="M0 5h9L4.500 0zM0 10h9L4.500 5z" /></Icon></PageButton>
              <PageButton aria-label="下一张"><Icon w={9} h={10} fill="#777" stroke="none"><path d="M0 0h9L4.500 5zM0 5h9L4.500 10z" /></Icon></PageButton>
            </ScrollColumn>
          </Editor>
        </WorkArea>
        <Status />
      </Window>
    </>
  );
}
